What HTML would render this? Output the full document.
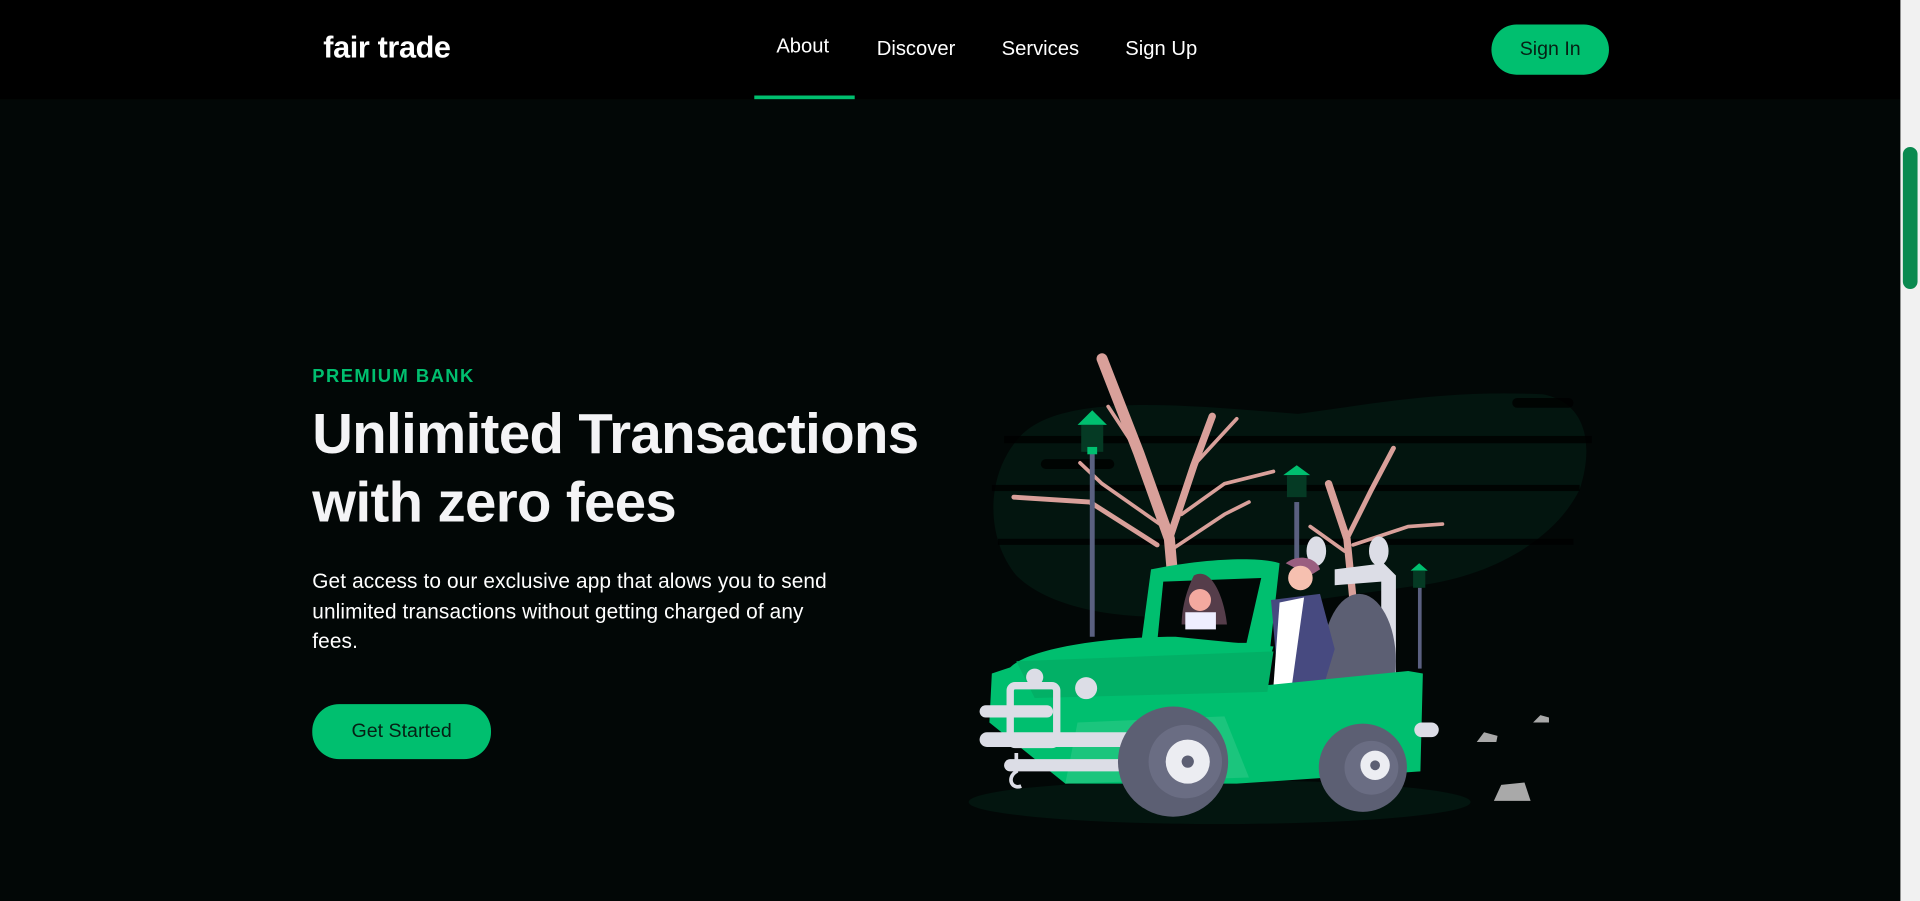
<!DOCTYPE html>
<html><head><meta charset="utf-8">
<style>
html,body{margin:0;padding:0;width:1920px;height:901px;overflow:hidden;background:#020706;}
#w{position:absolute;left:0;top:0;width:1568px;height:736px;transform:scale(1.22449);transform-origin:0 0;font-family:"Liberation Sans",sans-serif;background:#020706;}
.nav{position:absolute;left:0;top:0;width:1552px;height:81px;background:#000;}
.logo{position:absolute;left:264px;top:25px;color:#fff;font-weight:bold;font-size:25px;letter-spacing:-0.3px;}
.lk{position:absolute;top:31px;color:#fff;font-size:16.5px;}
.ul{position:absolute;left:616px;top:78px;width:82px;height:3px;background:#00bf6f;}
.btn{position:absolute;background:#00bf6f;color:#062014;border-radius:22px;text-align:center;}
.sb{position:absolute;left:1552px;top:0;width:16px;height:736px;background:#f1f1f1;}
.th{position:absolute;left:1554px;top:120px;width:12px;height:116px;background:#0a8a50;border-radius:6px;}
.pb{position:absolute;left:255px;top:299px;color:#00bf6f;font-weight:bold;font-size:15px;letter-spacing:1.2px;}
h1{position:absolute;left:255px;top:326px;margin:0;color:#f4f4f6;font-size:46px;line-height:56px;font-weight:bold;letter-spacing:-0.5px;}
p{position:absolute;left:255px;top:463px;margin:0;width:425px;color:#fff;font-size:17px;line-height:24.5px;letter-spacing:0.1px;}
</style></head><body><div id="w">
<div class="nav">
<div class="logo">fair trade</div>
<div class="lk" style="left:634px;top:29px">About</div>
<div class="lk" style="left:716px">Discover</div>
<div class="lk" style="left:818px">Services</div>
<div class="lk" style="left:919px">Sign Up</div>
<div class="ul"></div>
<div class="btn" style="left:1218px;top:20px;width:96px;height:41px;line-height:41px;font-size:16px;">Sign In</div>
</div>
<div class="sb"></div><div class="th"></div>
<div class="pb">PREMIUM BANK</div>
<h1>Unlimited Transactions<br>with zero fees</h1>
<p>Get access to our exclusive app that alows you to send unlimited transactions without getting charged of any<br>fees.</p>
<div class="btn" style="left:255px;top:575px;width:146px;height:45px;line-height:45px;font-size:16px;">Get Started</div>
<svg style="position:absolute;left:0;top:0" width="1568" height="736" viewBox="0 0 1568 736">
<path d="M830 360 C860 320 960 330 1060 338 C1120 330 1180 318 1260 322 C1300 330 1300 370 1290 400 C1270 440 1220 470 1160 478 L1000 500 C930 510 860 500 830 470 C805 440 805 390 830 360Z" fill="#03150f"/>
<g fill="#000" opacity="0.8"><rect x="820" y="356" width="480" height="6"/><rect x="810" y="396" width="480" height="5"/><rect x="815" y="440" width="470" height="5"/><rect x="850" y="375" width="60" height="8" rx="4"/><rect x="1235" y="325" width="50" height="8" rx="4"/></g>
<ellipse cx="996" cy="655" rx="205" ry="18" fill="#03150f"/>
<g stroke="#d9a09a" fill="none" stroke-linecap="round">
<path d="M962 520 L955 440 L930 370 L900 293" stroke-width="9"/>
<path d="M955 440 L975 380 L990 340" stroke-width="6"/>
<path d="M945 445 L890 410 L828 406" stroke-width="4"/>
<path d="M950 430 L900 395 L882 378" stroke-width="3"/>
<path d="M965 420 L1000 395 L1040 385" stroke-width="3"/>
<path d="M975 380 L1010 342" stroke-width="3"/>
<path d="M930 370 L905 332" stroke-width="3"/>
<path d="M955 450 L1000 420 L1020 410" stroke-width="3"/>
<path d="M1108 520 L1100 440 L1085 395" stroke-width="6"/>
<path d="M1100 440 L1120 400 L1138 366" stroke-width="4"/>
<path d="M1105 445 L1150 430 L1178 428" stroke-width="3"/>
<path d="M1098 450 L1070 430" stroke-width="3"/>
</g>
<g fill="#5a6080"><rect x="890" y="370" width="4" height="150"/><rect x="1057" y="410" width="4" height="60"/><rect x="1158" y="480" width="3" height="66"/></g>
<g fill="#00bf6f"><path d="M880 347 L892 335 L904 347Z"/><rect x="883" y="347" width="18" height="22" fill="#053a24"/><rect x="888" y="365" width="8" height="6"/>
<path d="M1048 388 L1059 380 L1070 388Z"/><rect x="1051" y="388" width="16" height="18" fill="#053a24"/>
<path d="M1152 466 L1159 460 L1166 466Z"/><rect x="1154" y="466" width="10" height="14" fill="#053a24"/></g>
<g fill="#dcdde6"><ellipse cx="1075" cy="450" rx="8" ry="12"/><ellipse cx="1126" cy="450" rx="8" ry="12"/>
<path d="M1090 465 L1130 460 L1140 470 L1140 590 L1128 590 L1128 475 L1090 478Z"/></g>
<ellipse cx="1110" cy="540" rx="30" ry="55" fill="#5c5f73"/>
<path d="M940 465 C990 455 1030 455 1045 460 L1035 550 L930 540Z" fill="#00bf6f"/>
<path d="M950 475 L1030 472 L1018 525 L945 525Z" fill="#020706"/>
<path d="M975 470 C990 462 1000 490 1002 510 L965 510 C965 495 970 480 975 470Z" fill="#553d4a"/>
<circle cx="980" cy="490" r="9" fill="#f3a99f"/><rect x="968" y="500" width="25" height="14" fill="#eef"/>
<path d="M1050 460 C1060 452 1075 455 1078 465 L1070 470 Z" fill="#9a5f80"/>
<circle cx="1062" cy="472" r="10" fill="#f6c0b0"/>
<path d="M1038 490 L1078 485 L1090 530 L1078 570 L1045 570Z" fill="#474a80"/><path d="M1045 492 L1065 488 L1055 560 L1040 560Z" fill="#fff"/>
<path d="M825 545 C840 530 900 520 960 520 L1040 528 L1030 560 L1150 548 L1162 550 L1160 630 L1010 640 L870 640 L808 590 L810 550Z" fill="#00bf6f"/>
<path d="M830 540 L1040 532 L1035 565 L845 570Z" fill="#02b066"/>
<path d="M870 640 L1020 635 L1000 585 L880 590Z" fill="#1bc57d"/>
<circle cx="845" cy="553" r="7" fill="#dcdde6"/><circle cx="887" cy="562" r="9" fill="#dcdde6"/>
<rect x="825" y="560" width="38" height="48" rx="4" fill="none" stroke="#dcdde6" stroke-width="6"/>
<g fill="#dcdde6"><rect x="800" y="576" width="60" height="10" rx="5"/><rect x="800" y="598" width="140" height="12" rx="6"/><rect x="820" y="620" width="120" height="10" rx="5"/><rect x="1155" y="590" width="20" height="12" rx="6"/></g>
<path d="M830 615 L830 630 C822 635 826 645 834 642" stroke="#dcdde6" stroke-width="3" fill="none"/>
<circle cx="958" cy="622" r="45" fill="#5c5f73"/><circle cx="968" cy="622" r="30" fill="#6a6d83"/><circle cx="970" cy="622" r="18" fill="#ecedf2"/><circle cx="970" cy="622" r="5" fill="#5c5f73"/>
<circle cx="1113" cy="627" r="36" fill="#5c5f73"/><circle cx="1120" cy="627" r="22" fill="#6a6d83"/><circle cx="1123" cy="625" r="12" fill="#ecedf2"/><circle cx="1123" cy="625" r="4" fill="#5c5f73"/>
<g fill="#a9a9a9"><path d="M1206 606 L1212 598 L1223 601 L1222 606Z"/><path d="M1252 590 L1258 584 L1265 586 L1265 590Z"/><path d="M1220 654 L1226 641 L1245 639 L1250 654Z"/></g>
</svg>
</div></body></html>
